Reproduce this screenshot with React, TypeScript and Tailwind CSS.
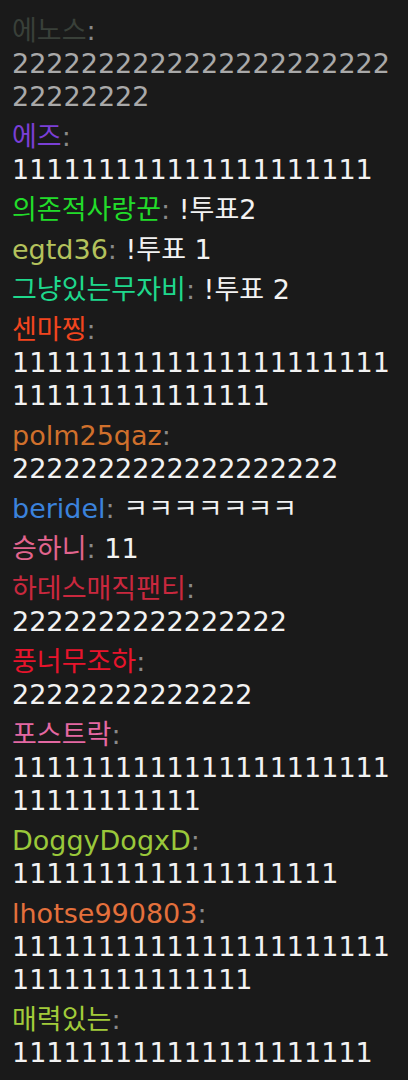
import React from "react";

type Msg = {
  name: string;
  color: string;
  text: string;
  faded?: boolean;
};

const messages: Msg[] = [
  { name: "에노스", color: "text-[#394039]", text: "222222222222222222222222222222", faded: true },
  { name: "에즈", color: "text-[#7a3fd6]", text: "111111111111111111111" },
  { name: "의존적사랑꾼", color: "text-[#22dc2a]", text: "!투표2" },
  { name: "egtd36", color: "text-[#b4c25c]", text: "!투표 1" },
  { name: "그냥있는무자비", color: "text-[#1fd88c]", text: "!투표 2" },
  { name: "센마찡", color: "text-[#f2451f]", text: "1111111111111111111111111111111111111" },
  { name: "polm25qaz", color: "text-[#d0702c]", text: "2222222222222222222" },
  { name: "beridel", color: "text-[#3b82dc]", text: "ㅋㅋㅋㅋㅋㅋㅋ" },
  { name: "승하니", color: "text-[#e2648e]", text: "11" },
  { name: "하데스매직팬티", color: "text-[#c9283e]", text: "2222222222222222" },
  { name: "풍너무조하", color: "text-[#e8142c]", text: "22222222222222" },
  { name: "포스트락", color: "text-[#e468a2]", text: "111111111111111111111111111111111" },
  { name: "DoggyDogxD", color: "text-[#9ac83a]", text: "1111111111111111111" },
  { name: "lhotse990803", color: "text-[#e4703c]", text: "111111111111111111111111111111111111" },
  { name: "매력있는", color: "text-[#a2cc3a]", text: "111111111111111111111" },
];

// 채팅 한 줄
function ChatLine({ msg }: { msg: Msg }) {
  return (
    <p className="break-words">
      <span className={msg.color}>{msg.name}</span>
      <span className="text-[#8a8a8a]">: </span>
      <span className={msg.faded ? "text-[#a9a9a9]" : "text-[#f2f2f2]"}>
        {msg.text}
      </span>
    </p>
  );
}

export default function App() {
  return (
    <div className="w-[408px] h-[1080px] overflow-hidden bg-[#1a1a1a] pl-3 pr-4 pt-[14px] flex flex-col gap-[7px] font-['DejaVu_Sans','Noto_Sans_CJK_KR',sans-serif] text-[27px] leading-[33px]">
      {messages.map((m, i) => (
        <ChatLine key={i} msg={m} />
      ))}
    </div>
  );
}
